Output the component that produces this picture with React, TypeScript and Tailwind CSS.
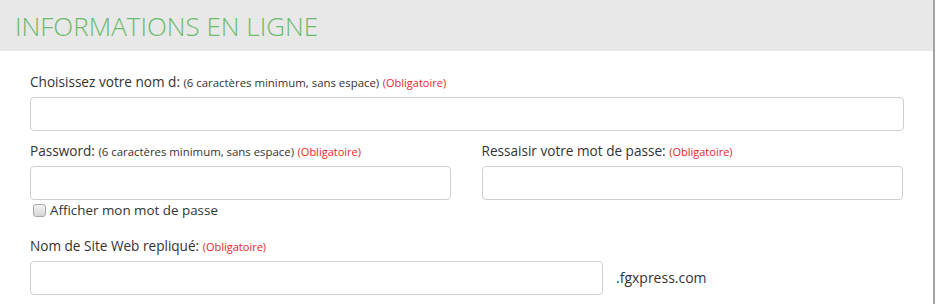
import React from "react";

const Req: React.FC = () => (
    <span className="text-[11px] text-[#e3262b]">(Obligatoire)</span>
);

const Field: React.FC<{ className?: string }> = ({className}) => (
    <div className={`h-[34px] border border-[#cfcfcf] rounded-[4px] bg-white ${className || ""}`}/>
);

const App: React.FC = () => {
    return (
        <div className="w-[936px] h-[304px] bg-white font-['Open_Sans',sans-serif] text-[#333]">
            <div className="w-[935px] h-[304px] border-r-2 border-[#a3a3a3]">
                {/* entete */}
                <div className="h-[51px] bg-[#e8e8e8] flex items-center px-[15px]">
                    <h2 className="text-[26px] font-light text-[#6cbb6c] leading-none">
                        INFORMATIONS EN LIGNE
                    </h2>
                </div>
                <div className="px-[30px] pt-[21px] text-[13.6px] leading-[20px]">
                    <label className="block mb-[4px]">
                        Choisissez votre nom d: <span className="text-[11.4px]">(6 caractères minimum, sans espace)</span> <Req/>
                    </label>
                    <Field className="w-[874px]"/>

                    <div className="flex gap-[31px] mt-[10px]">
                        <div className="w-[421px]">
                            <label className="block mb-[4px]">
                                Password: <span className="text-[11.4px]">(6 caractères minimum, sans espace)</span> <Req/>
                            </label>
                            <Field/>
                            <div className="flex items-center text-[13.4px]">
                                <span className="ml-[3px] mr-[4px] w-[13px] h-[13px] rounded-[3px] border border-[#a8a8a8] bg-gradient-to-b from-[#f2f2f2] to-[#d6d6d6]"/>
                                <span>Afficher mon mot de passe</span>
                            </div>
                        </div>
                        <div className="w-[422px]">
                            <label className="block mb-[4px]">
                                Ressaisir votre mot de passe: <Req/>
                            </label>
                            <Field/>
                        </div>
                    </div>

                    <label className="block mt-[16px] mb-[4px]">
                        Nom de Site Web repliqué: <Req/>
                    </label>
                    <div className="flex items-center">
                        <Field className="w-[573px]"/>
                        <span className="ml-[13px] text-[14px]">.fgxpress.com</span>
                    </div>
                </div>
            </div>
        </div>
    );
};

export default App;
